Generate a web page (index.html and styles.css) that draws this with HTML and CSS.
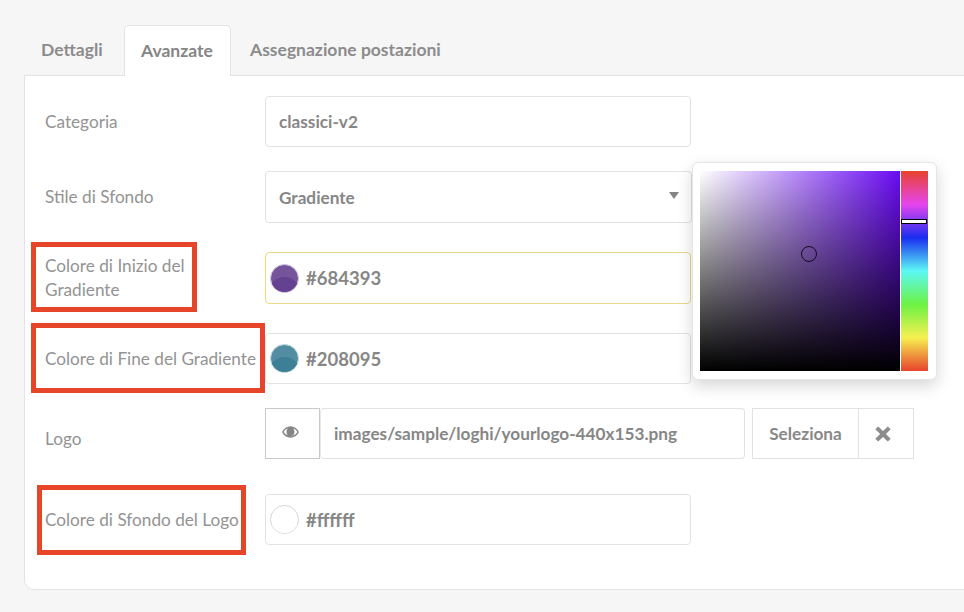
FILE: index.html
```html
<!DOCTYPE html>
<html lang="it">
<head>
<meta charset="utf-8">
<title>Avanzate</title>
<link rel="stylesheet" href="styles.css">
</head>
<body>
<div class="page">
  <nav class="tabs">
    <div class="tab">Dettagli</div>
    <div class="tab active">Avanzate</div>
    <div class="tab">Assegnazione postazioni</div>
  </nav>
  <section class="panel">
    <div class="row gap-24 h-51">
      <div class="label">Categoria</div>
      <div class="field">classici-v2</div>
    </div>
    <div class="row gap-29 h-52">
      <div class="label">Stile di Sfondo</div>
      <div class="field select"><span>Gradiente</span><i class="caret"></i></div>
    </div>
    <div class="row gap-29 h-52">
      <div class="label">Colore di Inizio del Gradiente</div>
      <div class="field color focus"><span class="swatch purple"></span><span class="hex">#684393</span></div>
    </div>
    <div class="row gap-24 h-51">
      <div class="label nowrap">Colore di Fine del Gradiente</div>
      <div class="field color"><span class="swatch teal"></span><span class="hex">#208095</span></div>
    </div>
    <div class="row gap-35 h-51">
      <div class="label low">Logo</div>
      <div class="group">
        <div class="addon">
          <svg class="eye" viewBox="0 0 18 12" width="17" height="12"><path fill-rule="evenodd" fill="#858585" d="M9 0C5.2 0 2 2.2 0 6c2 3.8 5.2 6 9 6s7-2.2 9-6c-2-3.800-5.200-6-9-6zM1.700 6C3.100 3.900 4.700 2.700 6.200 2.100A4.300 4.300 0 0 0 4.800 6a4.200 4.200 0 0 0 8.400 0c0-1.500-.5-2.900-1.400-3.900 1.500.6 3.100 1.800 4.500 3.900-1.800 2.700-4.200 4.400-6.800 4.400S3.500 8.700 1.700 6z"/><circle cx="7.300" cy="4.300" r="1.300" fill="#858585"/></svg>
        </div>
        <div class="field path">images/sample/loghi/yourlogo-440x153.png</div>
        <div class="btn select-btn">Seleziona</div>
        <div class="btn clear-btn">
          <svg viewBox="0 0 16 16" width="16" height="16"><path fill="#8d8d8d" d="M3.200.4 8 5.100 12.800.4 15.700 3.300 10.900 8l4.800 4.700-2.900 2.900L8 10.900l-4.800 4.700-2.900-2.900L5.100 8 .3 3.300z"/></svg>
        </div>
      </div>
    </div>
    <div class="row h-51">
      <div class="label nowrap">Colore di Sfondo del Logo</div>
      <div class="field color"><span class="swatch white"></span><span class="hex">#ffffff</span></div>
    </div>
  </section>

  <div class="picker">
    <div class="sat"><span class="pointer"></span></div>
    <div class="hue"><span class="hue-marker"></span></div>
  </div>

  <div class="mark mark-a"></div>
  <div class="mark mark-b"></div>
  <div class="mark mark-c"></div>
</div>
</body>
</html>
```
FILE: styles.css
```css
* { box-sizing: border-box; }
html, body { margin: 0; height: 100%; overflow: hidden; background: #f6f6f6; }
body { font-family: Lato, "Noto Sans", sans-serif; font-size: 17.2px; color: #8a8a8a; }
.page { position: relative; width: 964px; height: 612px; padding: 25px 0 0 24px; overflow: hidden; }

.tabs { display: flex; height: 50px; gap: 3px; }
.tab { width: 97px; padding-left: 17px; font-size: 17.5px; font-weight: 700; line-height: 50px; color: #8c8c8c; white-space: nowrap; }
.tab.active { position: relative; z-index: 1; width: 107px; height: 51px; padding-left: 16px; background: #fff; border: 1px solid #e3e3e3; border-bottom: 0; border-radius: 5px 5px 0 0; color: #868686; }
.tab:last-child { width: auto; padding-left: 16px; }

.panel { width: 960px; height: 515px; margin-right: -20px; padding: 20px 20px 0; background: #fff; border: 1px solid #e3e3e3; border-radius: 0 0 0 10px; }

.row { display: flex; align-items: center; }
.h-51 { height: 51px; }
.h-52 { height: 52px; }
.gap-24 { margin-bottom: 24px; }
.gap-29 { margin-bottom: 29px; }
.gap-35 { margin-bottom: 35px; }

.label { flex: 0 0 220px; padding-right: 64px; line-height: 24px; color: #939393; }
.label.nowrap { white-space: nowrap; padding-right: 0; }
.label.low { padding-top: 11px; }

.field { display: flex; align-items: center; width: 426px; height: 100%; padding: 0 13px; background: #fff; border: 1px solid #e2e2e2; border-radius: 4px; font-weight: 700; color: #868686; }
.select { justify-content: space-between; width: 427px; padding-right: 12px; }
.caret { width: 0; height: 0; margin-top: -3px; border-style: solid; border-width: 7px 5px 0; border-color: #858585 transparent transparent; }
.color { padding-left: 4px; gap: 7px; }
.focus { border-color: #e7d987; }
.hex { font-size: 18.5px; }

.swatch { position: relative; flex: none; width: 29px; height: 29px; border-radius: 50%; overflow: hidden; border: 1px solid #e4e4e4; }
.swatch::after { content: ""; position: absolute; left: -1px; right: -1px; top: 12px; height: 26px; border-radius: 50%; }
.purple { background: #75549b; border-color: #d8cfe2; }
.purple::after { background: #654192; }
.teal { background: #528da2; border-color: #c9dee5; }
.teal::after { background: #3d7f96; }
.white { background: #fff; border-color: #d6d6d6; }
.white::after { background: #fff; }

.group { display: flex; height: 100%; }
.addon { display: flex; justify-content: center; align-items: flex-start; padding: 17px 5px 0 0; width: 55px; height: 100%; background: #fff; border: 1px solid #c9c9c9; }
.path { width: 425px; border-left-color: #e8e8e8; }
.btn { display: flex; align-items: center; justify-content: center; height: 100%; background: #fff; border: 1px solid #e2e2e2; font-weight: 700; color: #888; }
.select-btn { width: 106px; margin-left: 7px; border-right: 0; }
.clear-btn { width: 56px; padding-right: 6px; border-left: 1px solid #e2e2e2; }

.picker { position: absolute; left: 692px; top: 162px; display: flex; gap: 1px; width: 245px; height: 218px; padding: 8px; background: #fff; border: 1px solid #e5e5e5; border-radius: 6px; box-shadow: 0 6px 16px rgba(0, 0, 0, .16); }
.sat { position: relative; flex: none; width: 200px; height: 200px; margin-left: -1px; background: linear-gradient(to bottom, rgba(0,0,0,0), #000), linear-gradient(to right, #fff, #6a0cf2); }
.pointer { position: absolute; left: 101px; top: 75px; width: 16px; height: 16px; border: 1px solid #120a20; border-radius: 50%; }
.hue { position: relative; flex: none; width: 27px; height: 200px; background: linear-gradient(to bottom, #e8432d 0%, #e644ee 16.67%, #1a2df0 33.33%, #5cf8f4 50%, #6cf244 66.67%, #f6f050 83.33%, #e8432d 100%); }
.hue-marker { position: absolute; left: 0; top: 48px; width: 26px; height: 5px; background: #fff; border: 1px solid #000; }

.mark { position: absolute; border: 5px solid #e6452a; }
.mark-a { left: 31px; top: 242px; width: 166px; height: 70px; }
.mark-b { left: 31px; top: 323px; width: 234px; height: 70px; }
.mark-c { left: 37px; top: 485px; width: 209px; height: 70px; }
```
